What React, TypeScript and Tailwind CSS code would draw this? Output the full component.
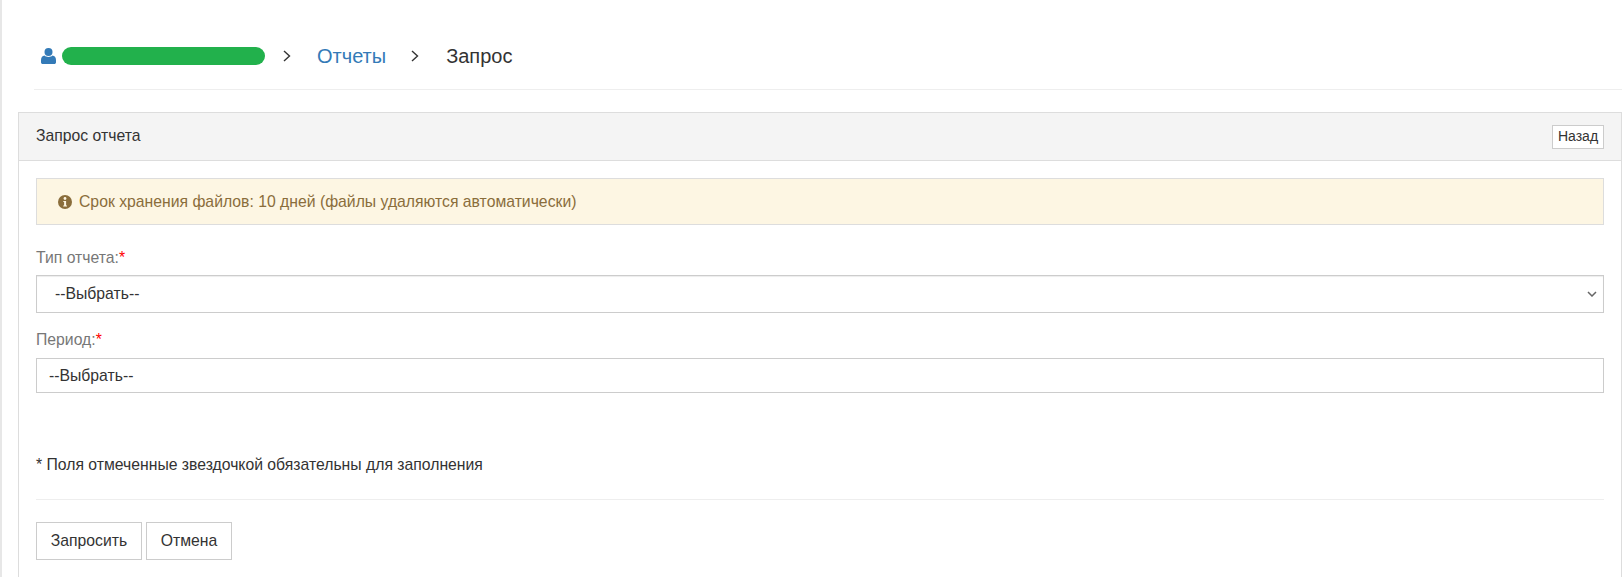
const font = "font-['Liberation_Sans',Arial,sans-serif]";

const Chevron = () => (
  <svg width="8" height="12" viewBox="0 0 8 12" fill="none" stroke="#333" strokeWidth="1.4">
    <path d="M1 1l5.5 5L1 11" />
  </svg>
);

const UserIcon = () => (
  <svg width="15" height="16" viewBox="0 0 15 16" fill="#337ab7">
    <circle cx="7.5" cy="4" r="4" />
    <path d="M3.5 7.5c1 1 2.4 1.4 4 1.4s3-.4 4-1.4c2 .3 3.5 1.8 3.5 4.5v2.2c0 1-.7 1.8-1.8 1.8H1.8C.7 16 0 15.200 0 14.200V12c0-2.700 1.500-4.200 3.500-4.500z" />
  </svg>
);

const InfoIcon = () => (
  <svg width="14" height="14" viewBox="0 0 14 14">
    <circle cx="7" cy="7" r="7" fill="#8a6d3b" />
    <circle cx="7" cy="3.500" r="1.400" fill="#fdf6e3" />
    <path d="M5.300 6h2.800v4.400h.9v1.100H5.200v-1.100h.9V7.100h-.8z" fill="#fdf6e3" />
  </svg>
);

export default function App() {
  return (
    <div className={`${font} min-h-[577px] border-l-2 border-[#e7e7e7] bg-white text-[#333] overflow-hidden`}>
      <div className="ml-[32px] h-[90px] border-b border-[#eeeeee] flex items-center pt-[22px] pl-[7px]">
        <UserIcon />
        <div className="ml-[6px] w-[203px] h-[18px] rounded-full bg-[#22b14c]" />
        <div className="ml-[18px]"><Chevron /></div>
        <a className="ml-[26px] text-[20px] text-[#337ab7]">Отчеты</a>
        <div className="ml-[25px]"><Chevron /></div>
        <span className="ml-[27px] text-[20px] text-[#333]">Запрос</span>
      </div>

      <div className="mt-[22px] ml-[16px] border-t border-l border-r border-[#dddddd] h-[465px]">
        <div className="h-[48px] bg-[#f4f4f4] border-b border-[#dddddd] flex items-center justify-between pl-[17px] pr-[17px]">
          <span className="text-[15.75px] pb-[1px]">Запрос отчета</span>
          <button className="w-[52px] h-[24px] bg-white border border-[#cccccc] text-[14px] text-[#333]">Назад</button>
        </div>

        <div className="pl-[17px] pr-[17px] pt-[17px]">
          <div className="h-[47px] bg-[#fdf6e3] border border-[#dddddd] flex items-center pl-[21px] text-[15.75px] text-[#8a6d3b] gap-[7px]">
            <InfoIcon />
            <span>Срок хранения файлов: 10 дней (файлы удаляются автоматически)</span>
          </div>

          <label className="block mt-[23px] text-[15.75px] leading-[20px] text-[#777]">
            Тип отчета:<span className="text-[#ff0000]">*</span>
          </label>
          <div className="mt-[7px] h-[38px] border border-[#cccccc] shadow-[inset_0_1px_1px_rgba(0,0,0,0.075)] flex items-center justify-between pl-[18px] pr-[6px] text-[15.75px] text-[#333]">
            <span>--Выбрать--</span>
            <svg width="10" height="6" viewBox="0 0 10 6" fill="none" stroke="#666" strokeWidth="1.500">
              <path d="M1 1l4 4 4-4" />
            </svg>
          </div>

          <label className="block mt-[17px] text-[15.75px] leading-[20px] text-[#777]">
            Период:<span className="text-[#ff0000]">*</span>
          </label>
          <div className="mt-[8px] h-[35px] border border-[#cccccc] flex items-center pl-[12px] pt-[1px] text-[15.75px] text-[#333]">
            --Выбрать--
          </div>

          <p className="mt-[62px] text-[15.75px] leading-[20px] text-[#333]">* Поля отмеченные звездочкой обязательны для заполнения</p>

          <div className="mt-[24px] border-t border-[#eeeeee]" />

          <div className="mt-[22px] flex gap-[4px]">
            <button className="w-[106px] h-[38px] border border-[#cccccc] text-[15.75px] text-[#333]">Запросить</button>
            <button className="w-[86px] h-[38px] border border-[#cccccc] text-[15.75px] text-[#333]">Отмена</button>
          </div>
        </div>
      </div>
    </div>
  );
}
